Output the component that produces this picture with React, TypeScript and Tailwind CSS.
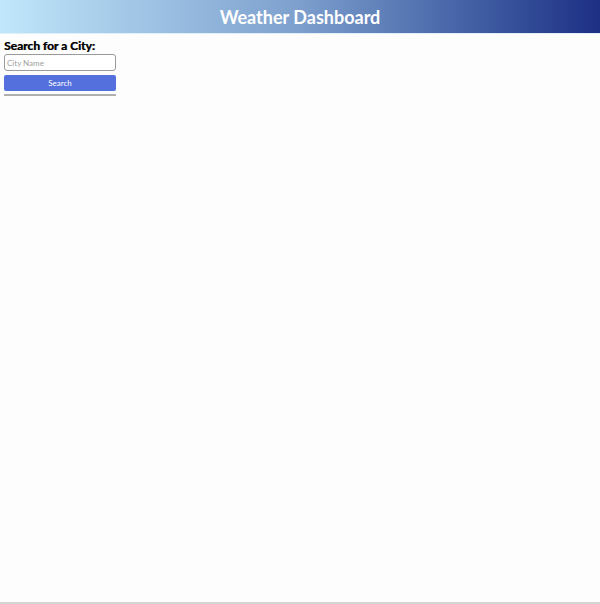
import React from "react";

export default function App() {
  return (
    <div className="w-[600px] h-[604px] bg-[#fdfdfd] flex flex-col" style={{ fontFamily: "Lato, 'Open Sans', sans-serif" }}>
      <header className="h-[34px] flex items-center justify-center bg-gradient-to-r from-[#c0e7fa] via-[#7d9fcd] to-[#1e2f84] border-b border-[#e4eef8]">
        <h1 className="text-white font-bold text-[18px] leading-none">Weather Dashboard</h1>
      </header>
      <div className="flex-1 flex">
        <aside className="w-[112px] ml-[4px] mt-[5px] flex flex-col">
          <h2 className="text-[12px] font-bold leading-[14px] text-black [text-shadow:0.6px_0_0_#555]">Search for a City:</h2>
          <input
            placeholder="City Name"
            className="mt-[1px] h-[17px] w-full border border-[#9a9a9a] rounded-[3px] px-[2px] text-[8px] placeholder:text-[#a0a0a0] outline-none bg-white"
          />
          <button className="mt-[4px] h-[16px] w-full bg-[#5470dc] text-white text-[8px] rounded-[2px] flex items-center justify-center">
            Search
          </button>
          <div className="mt-[3px] h-[2px] w-full bg-[#b0b0b0]" />
        </aside>
      </div>
      <div className="h-[2px] bg-[#d4d4d4]" />
    </div>
  );
}
